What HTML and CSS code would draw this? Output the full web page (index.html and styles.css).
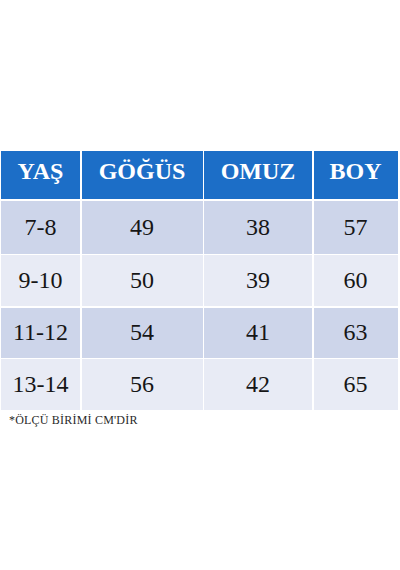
FILE: index.html
```html
<!DOCTYPE html>
<html lang="tr">
<head>
<meta charset="utf-8">
<title>Beden Tablosu</title>
<link rel="stylesheet" href="styles.css">
</head>
<body>
<div class="page">
  <div class="chart">
    <div class="cell head">YAŞ</div>
    <div class="cell head">GÖĞÜS</div>
    <div class="cell head">OMUZ</div>
    <div class="cell head">BOY</div>

    <div class="cell dark">7-8</div>
    <div class="cell dark">49</div>
    <div class="cell dark">38</div>
    <div class="cell dark">57</div>

    <div class="cell light">9-10</div>
    <div class="cell light">50</div>
    <div class="cell light">39</div>
    <div class="cell light">60</div>

    <div class="cell dark">11-12</div>
    <div class="cell dark">54</div>
    <div class="cell dark">41</div>
    <div class="cell dark">63</div>

    <div class="cell light">13-14</div>
    <div class="cell light">56</div>
    <div class="cell light">42</div>
    <div class="cell light">65</div>
  </div>
  <p class="note">*ÖLÇÜ BİRİMİ CM'DİR</p>
</div>
</body>
</html>
```

FILE: styles.css
```css
html, body {
  margin: 0;
  padding: 0;
  background: #ffffff;
}

.page {
  padding-top: 151px;
  padding-left: 1px;
  font-family: "Liberation Serif", "DejaVu Serif", serif;
}

.chart {
  display: grid;
  grid-template-columns: 79px 121px 108px 84px;
  grid-template-rows: 48px 53px 51px 50px 51px;
  column-gap: 1.5px;
  row-gap: 1.5px;
  width: 394px;
}

.cell {
  display: flex;
  align-items: center;
  justify-content: center;
  font-size: 24px;
  color: #161616;
}

.head {
  background: #1c6ec7;
  color: #ffffff;
  font-weight: bold;
  font-size: 24px;
  padding-bottom: 8px;
  box-sizing: border-box;
}

.dark {
  background: #cdd5ea;
}

.light {
  background: #e8ebf5;
}

.note {
  margin: 3px 0 0 8px;
  font-size: 12px;
  color: #2a2a2a;
  letter-spacing: 0.2px;
}
```
